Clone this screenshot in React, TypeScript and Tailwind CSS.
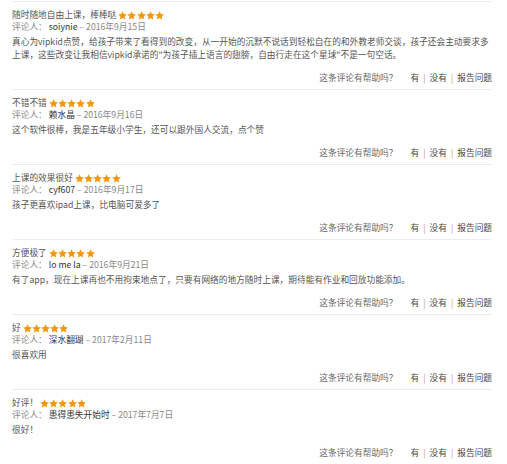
import React from "react";

type Review = { title: string; name: string; date: string; body: string };

const reviews: Review[] = [
  {
    title: "随时随地自由上课，棒棒哒",
    name: "soiynie",
    date: "2016年9月15日",
    body: '真心为vipkid点赞，给孩子带来了看得到的改变，从一开始的沉默不说话到轻松自在的和外教老师交谈，孩子还会主动要求多上课，这些改变让我相信vipkid承诺的"为孩子插上语言的翅膀，自由行走在这个星球"不是一句空话。',
  },
  {
    title: "不错不错",
    name: "赖水晶",
    date: "2016年9月16日",
    body: "这个软件很棒，我是五年级小学生，还可以跟外国人交流，点个赞",
  },
  {
    title: "上课的效果很好",
    name: "cyf607",
    date: "2016年9月17日",
    body: "孩子更喜欢ipad上课，比电脑可爱多了",
  },
  {
    title: "方便极了",
    name: "lo me la",
    date: "2016年9月21日",
    body: "有了app，现在上课再也不用拘束地点了，只要有网络的地方随时上课，期待能有作业和回放功能添加。",
  },
  {
    title: "好",
    name: "深水翻瑚",
    date: "2017年2月11日",
    body: "很喜欢用",
  },
  {
    title: "好评！",
    name: "患得患失开始时",
    date: "2017年7月7日",
    body: "很好！",
  },
];

function Star() {
  return (
    <svg width="9.2" height="9" viewBox="1 1.2 22 21" className="shrink-0">
      <path
        d="M12 1.5l3.1 6.9 7.4.7-5.6 5 1.7 7.4L12 17.7l-6.6 3.8 1.7-7.4-5.6-5 7.4-.7z"
        fill="#f5960f"
      />
    </svg>
  );
}

function ReviewItem({ r }: { r: Review }) {
  return (
    <div className="border-t border-[#ececec] pt-[7px] pb-[5px]">
      <div className="flex items-center h-[12px] leading-[12px] text-[#555]">
        <span>{r.title}</span>
        <span className="flex ml-[2px]">
          <Star />
          <Star />
          <Star />
          <Star />
          <Star />
        </span>
      </div>
      <div className="h-[12px] leading-[12px] text-[#888]">
        <span>评论人：</span>
        <span className="ml-[2px] text-[#333]">{r.name}</span>
        <span> – {r.date}</span>
      </div>
      <p className="mt-[2px] leading-[13px] text-[#555]">{r.body}</p>
      <div className="mt-[11px] flex justify-end h-[12px] leading-[12px] text-[#555]">
        <span className="text-[#666]">这条评论有帮助吗？</span>
        <span className="ml-[13px] text-[#444]">有</span>
        <span className="mx-[4px] text-[#c9996b]">|</span>
        <span className="text-[#444]">没有</span>
        <span className="mx-[4px] text-[#c9996b]">|</span>
        <span className="text-[#444]">报告问题</span>
      </div>
    </div>
  );
}

export default function App() {
  return (
    <div
      className="w-[507px] h-[464px] bg-white overflow-hidden pt-[1px] pl-[12px] text-[8.7px]"
      style={{ fontFamily: '"Noto Sans CJK SC", "Noto Sans", sans-serif' }}
    >
      <div className="w-[480px]">
        {reviews.map((r, i) => (
          <ReviewItem key={i} r={r} />
        ))}
      </div>
    </div>
  );
}
